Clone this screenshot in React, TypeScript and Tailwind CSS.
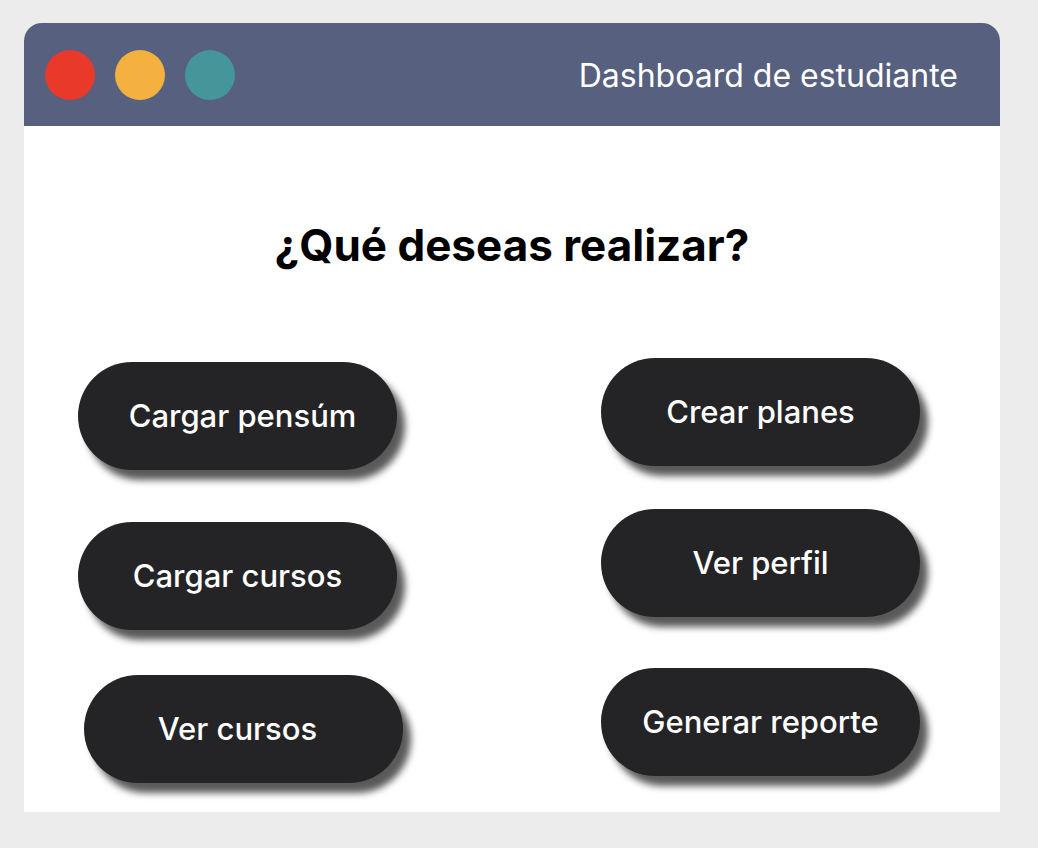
const left = [
  { label: "Cargar pensúm", cls: "mt-0 ml-0", text: "pl-[10px]" },
  { label: "Cargar cursos", cls: "mt-[52px] ml-0", text: "" },
  { label: "Ver cursos", cls: "mt-[45px] ml-[6px]", text: "pr-[12px]" },
];

const right = [
  { label: "Crear planes", cls: "mt-0", text: "" },
  { label: "Ver perfil", cls: "mt-[43px]", text: "" },
  { label: "Generar reporte", cls: "mt-[51px]", text: "" },
];

function ActionButton({ label, cls, text }: { label: string; cls: string; text: string }) {
  return (
    <button
      className={`${cls} w-[319px] h-[108px] rounded-full bg-[#242426] text-white text-[31px] font-medium shadow-[8px_10px_7px_rgba(0,0,0,0.65)] flex items-center justify-center ${text}`}
    >
      {label}
    </button>
  );
}

export default function App() {
  return (
    <div className="w-[1038px] h-[848px] bg-[#ececec] pt-[23px] pl-[24px]" style={{ fontFamily: "Inter, 'Noto Sans', sans-serif" }}>
      <div className="w-[976px] h-[789px] bg-white rounded-t-[18px] overflow-hidden flex flex-col">
        {/* Title bar */}
        <div className="h-[103px] bg-[#57607f] flex items-center pl-[21px] pr-[42px] shrink-0">
          <div className="flex gap-[20px]">
            <span className="w-[50px] h-[50px] rounded-full bg-[#e8392b]" />
            <span className="w-[50px] h-[50px] rounded-full bg-[#f4b13f]" />
            <span className="w-[50px] h-[50px] rounded-full bg-[#44969a]" />
          </div>
          <div className="ml-auto text-white text-[32px] pt-[2px]">Dashboard de estudiante</div>
        </div>

        {/* Body */}
        <div className="flex flex-col">
          <h1 className="text-center text-black font-bold text-[44px] leading-[52px] mt-[93px]">
            ¿Qué deseas realizar?
          </h1>
          <div className="flex mt-[87px] pl-[54px]">
            <div className="flex flex-col pt-[4px]">
              {left.map((b) => (
                <ActionButton key={b.label} {...b} />
              ))}
            </div>
            <div className="flex flex-col ml-[198px]">
              {right.map((b) => (
                <ActionButton key={b.label} {...b} />
              ))}
            </div>
          </div>
        </div>
      </div>
    </div>
  );
}
